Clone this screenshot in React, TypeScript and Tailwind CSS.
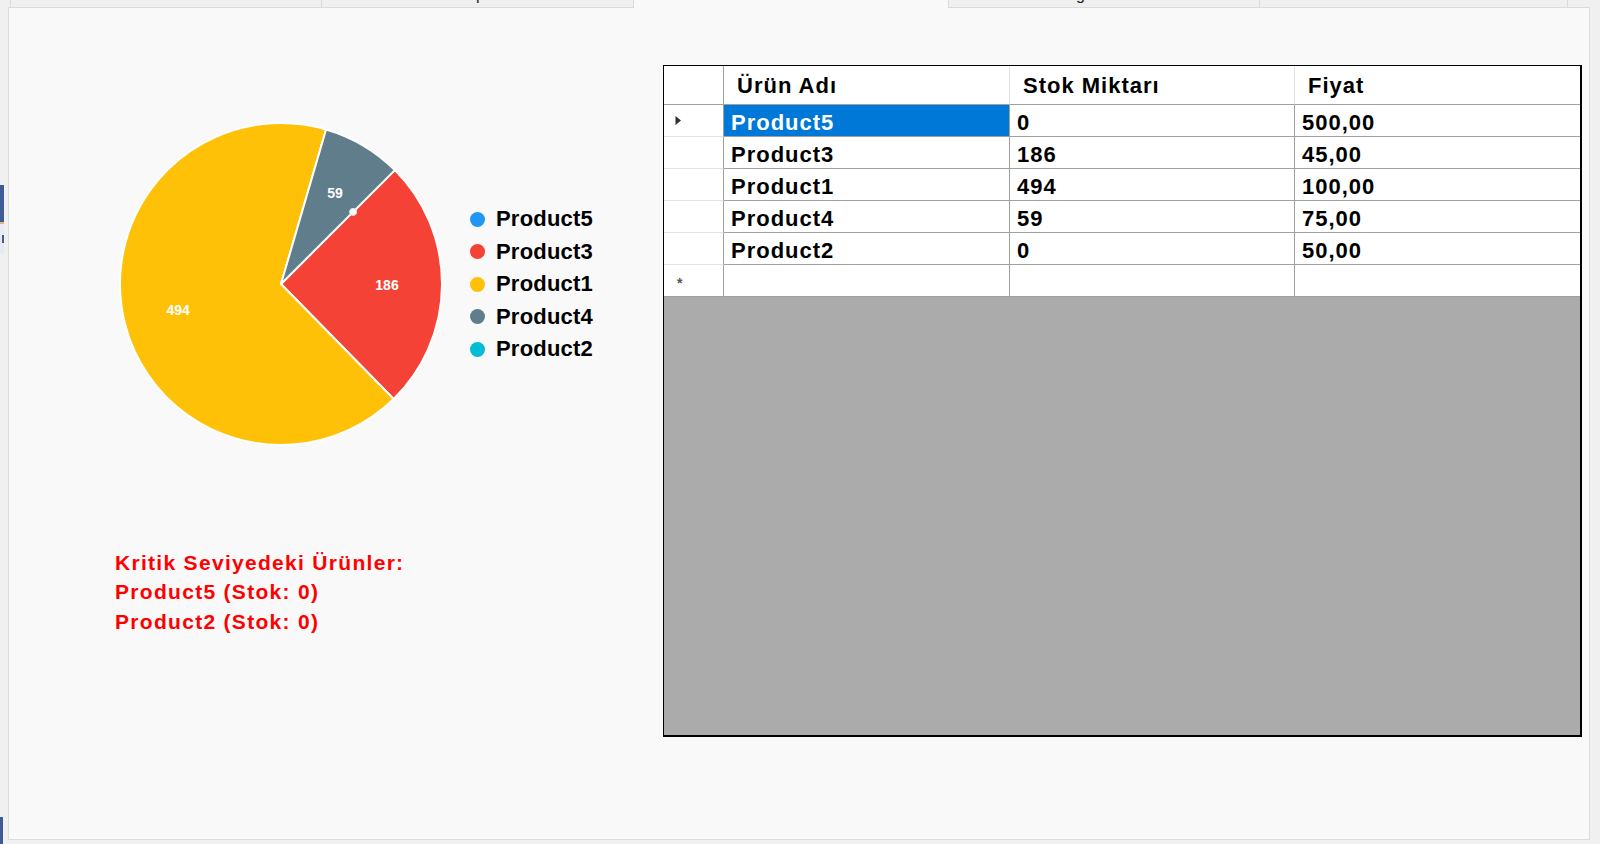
import React from "react";

type Slice = { name: string; value: number; color: string };

const slices: Slice[] = [
  { name: "Product5", value: 0, color: "#2196F3" },
  { name: "Product3", value: 186, color: "#F44336" },
  { name: "Product1", value: 494, color: "#FFC107" },
  { name: "Product4", value: 59, color: "#607D8B" },
  { name: "Product2", value: 0, color: "#00BCD4" },
];

const rows = [
  { name: "Product5", stock: "0", price: "500,00" },
  { name: "Product3", stock: "186", price: "45,00" },
  { name: "Product1", stock: "494", price: "100,00" },
  { name: "Product4", stock: "59", price: "75,00" },
  { name: "Product2", stock: "0", price: "50,00" },
];

function PieChart() {
  const cx = 165;
  const cy = 165;
  const r = 161;
  const total = slices.reduce((s, x) => s + x.value, 0);
  const pt = (deg: number, rad: number) => {
    const a = (deg * Math.PI) / 180;
    return [cx + rad * Math.sin(a), cy - rad * Math.cos(a)];
  };
  let angle = 45;
  const parts: React.ReactNode[] = [];
  const labels: React.ReactNode[] = [];
  slices.forEach((s) => {
    const sweep = (s.value / total) * 360;
    const a0 = angle;
    const a1 = angle + sweep;
    angle = a1;
    if (s.value <= 0) return;
    const [x0, y0] = pt(a0, r);
    const [x1, y1] = pt(a1, r);
    const large = sweep > 180 ? 1 : 0;
    parts.push(
      <path
        key={s.name}
        d={`M ${cx} ${cy} L ${x0} ${y0} A ${r} ${r} 0 ${large} 1 ${x1} ${y1} Z`}
        fill={s.color}
        stroke="#ffffff"
        strokeWidth={2}
        strokeLinejoin="round"
      />
    );
    const [lx, ly] = pt((a0 + a1) / 2, 106);
    labels.push(
      <text
        key={s.name + "-l"}
        x={lx}
        y={ly}
        fill="#ffffff"
        fontSize={14}
        fontWeight={700}
        textAnchor="middle"
        dominantBaseline="central"
        fontFamily='"Liberation Sans", Arial, sans-serif'
      >
        {s.value}
      </text>
    );
  });
  const [zx, zy] = pt(45, 102);
  return (
    <svg width={330} height={330} viewBox="0 0 330 330" className="shrink-0">
      {parts}
      {labels}
      <circle cx={zx} cy={zy} r={3.5} fill="#ffffff" stroke="#d6ecfa" strokeWidth={1} />
    </svg>
  );
}

function Legend() {
  return (
    <div className="flex flex-col ml-[24px]">
      {slices.map((s) => (
        <div key={s.name} className="flex items-center h-[32.5px]">
          <span className="w-[15px] h-[15px] rounded-full" style={{ backgroundColor: s.color }} />
          <span className="ml-[11px] text-[22px] font-bold tracking-[0.2px] text-black leading-none">
            {s.name}
          </span>
        </div>
      ))}
    </div>
  );
}

function DataGrid() {
  const cellText = "text-[22px] font-bold tracking-[1px] text-black leading-none";
  return (
    <div className="w-[919px] h-[672px] border-l border-t border-r-2 border-b-2 border-black bg-[#ababab] flex flex-col">
      <div className="grid grid-cols-[60px_286px_285px_285px] bg-white">
        {/* header */}
        <div className="h-[39px] border-b border-r border-[#a0a0a0] bg-white" />
        <div className={`h-[39px] border-b border-r border-b-[#a0a0a0] border-r-[#e3e3e3] flex items-center pl-[13px] pt-[1px] ${cellText}`}>
          Ürün Adı
        </div>
        <div className={`h-[39px] border-b border-r border-b-[#a0a0a0] border-r-[#e3e3e3] flex items-center pl-[13px] pt-[1px] ${cellText}`}>
          Stok Miktarı
        </div>
        <div className={`h-[39px] border-b border-[#a0a0a0] flex items-center pl-[13px] pt-[1px] ${cellText}`}>
          Fiyat
        </div>
        {rows.map((r, i) => (
          <React.Fragment key={r.name}>
            <div className="h-[32px] border-b border-r border-b-[#e3e3e3] border-r-[#a0a0a0] flex items-center pl-[10px]">
              {i === 0 && (
                <svg width="8" height="11" viewBox="0 0 8 11">
                  <path d="M1.5 1 L7 5.5 L1.5 10 Z" fill="#303030" />
                </svg>
              )}
            </div>
            <div
              className={`h-[32px] border-b border-r border-[#a0a0a0] flex items-center pl-[7px] pt-[4px] ${cellText} ${
                i === 0 ? "bg-[#0078d7] !text-white" : ""
              }`}
            >
              {r.name}
            </div>
            <div className={`h-[32px] border-b border-r border-[#a0a0a0] flex items-center pl-[7px] pt-[4px] ${cellText}`}>
              {r.stock}
            </div>
            <div className={`h-[32px] border-b border-[#a0a0a0] flex items-center pl-[7px] pt-[4px] ${cellText}`}>
              {r.price}
            </div>
          </React.Fragment>
        ))}
        {/* new row */}
        <div className="h-[32px] border-b border-r border-b-[#a0a0a0] border-r-[#a0a0a0] flex items-center pl-[13px] pt-[4px]">
          <span className="text-[14px] font-bold text-[#555] leading-none">*</span>
        </div>
        <div className="h-[32px] border-b border-r border-[#a0a0a0]" />
        <div className="h-[32px] border-b border-r border-[#a0a0a0]" />
        <div className="h-[32px] border-b border-[#a0a0a0]" />
      </div>
    </div>
  );
}

export default function App() {
  return (
    <div className="w-[1600px] h-[844px] bg-[#f0f0f0] flex overflow-hidden font-['Liberation_Sans',Arial,sans-serif]">
      {/* left edge fragments of a window behind */}
      <div className="w-[8px] h-[844px] flex flex-col">
        <div className="h-[185px]" />
        <div className="w-[4px] h-[37px] bg-[#3f5a95]" />
        <div className="w-[4px] h-[2px] bg-[#d9b77a]" />
        <div className="w-[4px] h-[30px] bg-[#e8eaf0] flex items-center">
          <div className="w-[2px] h-[8px] bg-[#4a5a8a] ml-[2px]" />
        </div>
        <div className="flex-1" />
        <div className="w-[3px] h-[27px] bg-[#3f5a95]" />
      </div>

      <div className="w-[1582px] flex flex-col">
        {/* tab strip */}
        <div className="h-[8px] flex">
          <div className="w-[2px] border-b border-[#dadada]" />
          <div className="w-[311px] bg-[#f0f0f0] border-l border-b border-[#dadada]" />
          <div className="w-[312px] bg-[#f0f0f0] border-l border-b border-[#dadada] overflow-hidden">
            <div className="ml-[154px] -mt-[13px] text-[16px] leading-[16px] text-[#202020]">p</div>
          </div>
          <div className="w-[316px] bg-[#f9f9f9] border-l border-r border-[#dadada]" />
          <div className="w-[310px] bg-[#f0f0f0] border-b border-[#dadada] overflow-hidden">
            <div className="ml-[127px] -mt-[13px] text-[16px] leading-[16px] text-[#202020]">g</div>
          </div>
          <div className="w-[309px] bg-[#f0f0f0] border-l border-r border-b border-[#dadada]" />
          <div className="flex-1 border-b border-[#dadada]" />
        </div>

        {/* panel */}
        <div className="h-[832px] bg-[#f9f9f9] border border-t-0 border-[#dcdcdc] flex pt-[57px]">
          <div className="w-[654px] flex flex-col">
            <div className="mt-[54px] flex items-center">
              <div className="ml-[107px]">
                <PieChart />
              </div>
              <Legend />
            </div>
            <div className="mt-[99px] ml-[106px] flex flex-col text-[#ff0000] text-[21px] font-bold tracking-[1.3px] leading-[29.3px]">
              <span>Kritik Seviyedeki Ürünler:</span>
              <span>Product5 (Stok: 0)</span>
              <span>Product2 (Stok: 0)</span>
            </div>
          </div>
          <DataGrid />
        </div>
      </div>
      <div className="w-[10px]" />
    </div>
  );
}
